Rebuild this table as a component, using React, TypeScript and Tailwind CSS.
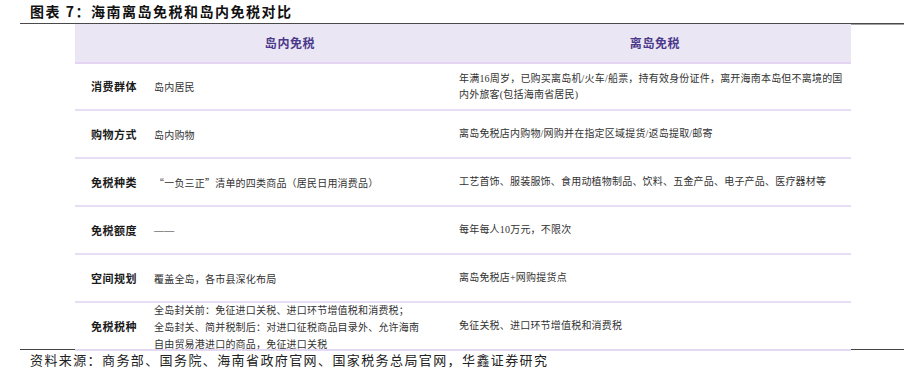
import React from "react";

const FONT = { fontFamily: '"Liberation Serif", "Noto Sans CJK SC", serif' };
const CJK = { fontFamily: '"Noto Sans CJK SC", serif' };

type Row = { label: string; left: string[]; right: string[]; h: string; border: boolean };

const rows: Row[] = [
  {
    label: "消费群体",
    left: ["岛内居民"],
    right: [
      "年满16周岁，已购买离岛机/火车/船票，持有效身份证件，离开海南本岛但不离境的国",
      "内外旅客(包括海南省居民)",
    ],
    h: "h-[47px]",
    border: true,
  },
  { label: "购物方式", left: ["岛内购物"], right: ["离岛免税店内购物/网购并在指定区域提货/返岛提取/邮寄"], h: "h-[48px]", border: true },
  {
    label: "免税种类",
    left: ["“一负三正”清单的四类商品（居民日用消费品）"],
    right: ["工艺首饰、服装服饰、食用动植物制品、饮料、五金产品、电子产品、医疗器材等"],
    h: "h-[48px]",
    border: true,
  },
  { label: "免税额度", left: ["——"], right: ["每年每人10万元，不限次"], h: "h-[48px]", border: true },
  { label: "空间规划", left: ["覆盖全岛，各市县深化布局"], right: ["离岛免税店+网购提货点"], h: "h-[48px]", border: true },
  {
    label: "免税税种",
    left: [
      "全岛封关前：免征进口关税、进口环节增值税和消费税；",
      "全岛封关、简并税制后：对进口征税商品目录外、允许海南",
      "自由贸易港进口的商品，免征进口关税",
    ],
    right: ["免征关税、进口环节增值税和消费税"],
    h: "h-[46px]",
    border: false,
  },
];

export default function App() {
  return (
    <div className="w-[904px] h-[372px] bg-white overflow-hidden flex flex-col" style={FONT}>
      <div className="h-[23px] pl-[30px] flex items-center text-[14px] font-bold tracking-[1.5px] text-[#111]" style={CJK}>
        图表 7：海南离岛免税和岛内免税对比
      </div>
      <div className="ml-[20px] h-px bg-[#4a4a4a]" />
      <div className="flex">
        <div className="w-[75px] shrink-0" />
        <div className="w-[776px] shrink-0 flex flex-col">
          <div className="h-[40px] bg-[#ebe6f3] border-b-2 border-[#e4d4f2] flex items-center text-[12px] tracking-[0.6px] text-[#4b3a8c] font-semibold" style={CJK}>
            <div className="w-[46px]" />
            <div className="w-[338px] text-center">岛内免税</div>
            <div className="w-[392px] text-center">离岛免税</div>
          </div>
          {rows.map((r) => (
            <div key={r.label} className={`${r.h} flex items-center ${r.border ? "border-b-2 border-[#e8ddf4]" : ""}`}>
              <div className="w-[79px] shrink-0 pl-[16px] text-[11px] font-bold tracking-[0.5px] text-[#1a1a1a]" style={CJK}>
                {r.label}
              </div>
              <div
                className="w-[305px] shrink-0 text-[10px] tracking-[0.2px] text-[#333] leading-[17px] whitespace-nowrap"
                style={r.left[0] === "——" ? FONT : CJK}
              >
                {r.left.map((l) => (
                  <div key={l}>{l}</div>
                ))}
              </div>
              <div className="w-[392px] shrink-0 text-[10px] tracking-[0.2px] text-[#333] leading-[16px] whitespace-nowrap">
                {r.right.map((l) => (
                  <div key={l}>{l}</div>
                ))}
              </div>
            </div>
          ))}
        </div>
        <div className="w-[53px] shrink-0 flex flex-col">
          <div className="h-px bg-[#a0a0a0]" />
        </div>
      </div>
      <div className="flex h-[2px]">
        <div className="w-[20px] shrink-0" />
        <div className="w-[55px] shrink-0 h-px bg-[#444]" />
        <div className="w-[776px] shrink-0 h-[2px] bg-[#e4d8f2]" />
        <div className="w-[53px] shrink-0 h-px bg-[#444]" />
      </div>
      <div className="pl-[30px] pt-[1px] text-[13px] tracking-[1.4px] text-[#222] leading-[17px] whitespace-nowrap">
        资料来源：商务部、国务院、海南省政府官网、国家税务总局官网，华鑫证券研究
      </div>
    </div>
  );
}
